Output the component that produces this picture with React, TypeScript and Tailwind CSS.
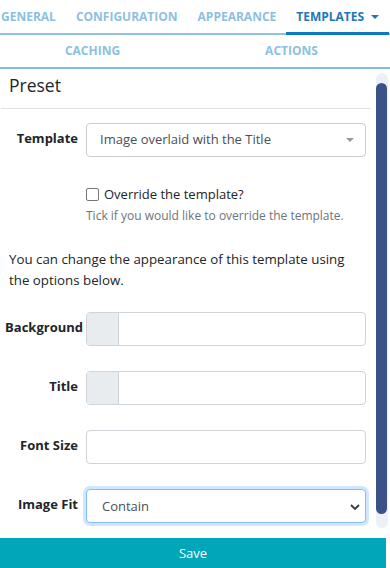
import { useState } from 'react';

const tabs = ['General', 'Configuration', 'Appearance'];

function Caret({ className }: { className?: string }) {
  return (
    <svg width="8" height="4" viewBox="0 0 8 4" className={className}>
      <path d="M0 0h8L4 4z" fill="currentColor" />
    </svg>
  );
}

function Label({ children, className = 'pr-[8px]' }: { children: string; className?: string }) {
  return (
    <div className={`w-[86px] shrink-0 pt-[5px] text-right text-[13px] leading-[21px] font-bold text-[#212529] whitespace-nowrap ${className}`}>
      {children}
    </div>
  );
}

function ColourInput() {
  return (
    <div className="flex h-[34px] flex-1 rounded-[4px] border border-[#ced4da] overflow-hidden">
      <div className="w-[32px] bg-[#e9ecef] border-r border-[#ced4da]" />
      <input className="flex-1 outline-none px-3" />
    </div>
  );
}

function App() {
  const [fit, setFit] = useState('contain');

  return (
    <div className="w-[390px] h-[568px] flex flex-col bg-white overflow-hidden font-['Open_Sans',sans-serif] text-[#212529]">
      {/* Tabs */}
      <div className="overflow-hidden">
        <nav className="flex h-[35px] border-b-2 border-[#90c2e0] ml-[-9px] w-[400px]">
          {tabs.map((t) => (
            <div key={t} className="px-[10px] pt-[1px] flex items-center text-[12px] font-bold uppercase text-[#8dc0df]">
              {t}
            </div>
          ))}
          <div className="px-[10px] pt-[1px] flex items-center gap-[7px] text-[12px] font-bold uppercase text-[#1c78b8] border-b-[3px] border-[#0b7ac0] mb-[-2px] h-[35px]">
            Templates
            <Caret className="text-[#1c78b8]" />
          </div>
        </nav>
        <div className="flex h-[34px] border-b-2 border-[#88bcdc] text-[12px] font-bold uppercase text-[#8dc0df]">
          <div className="w-[185px] flex items-center justify-center">Caching</div>
          <div className="w-[8px]" />
          <div className="flex-1 flex items-center justify-center">Actions</div>
        </div>
      </div>

      {/* Body */}
      <div className="flex flex-1 min-h-0">
        <div className="flex-1 overflow-hidden pr-[6px]">
          <div className="mr-[-5px] ml-[1px] border-b border-[#dee2e6] pl-[8px] pt-[3px] pb-[9px] text-[17.5px] leading-[27px] font-medium text-[#212529]">
            Preset
          </div>

          <div className="flex mt-[14px]">
            <Label>Template</Label>
            <div className="flex-1 h-[34px] rounded-[4px] border border-[#c9ced4] flex items-center pl-[13px] pr-[11px] text-[13px] text-[#495057]">
              <span className="flex-1">Image overlaid with the Title</span>
              <Caret className="text-[#999999]" />
            </div>
          </div>

          <div className="ml-[86px] mt-[27px]">
            <label className="flex items-center gap-[5px] text-[13px] leading-[21px] text-[#212529]">
              <input type="checkbox" className="appearance-none w-[13px] h-[13px] border border-[#767676] rounded-[2px] bg-white" />
              Override the template?
            </label>
            <p className="mt-[2px] text-[12px] leading-[18px] text-[#6c757d]">Tick if you would like to override the template.</p>
          </div>

          <p className="mt-[24px] pl-[9px] w-[350px] text-[13.3px] leading-[21px] text-[#212529]">
            You can change the appearance of this template using the options below.
          </p>

          <div className="flex mt-[21px]">
            <Label className="pl-[5px] pr-[3px]">Background</Label>
            <ColourInput />
          </div>

          <div className="flex mt-[25px]">
            <Label>Title</Label>
            <ColourInput />
          </div>

          <div className="flex mt-[25px]">
            <Label>Font Size</Label>
            <input className="flex-1 h-[34px] rounded-[4px] border border-[#ced4da] outline-none px-3" />
          </div>

          <div className="flex mt-[25px]">
            <Label>Image Fit</Label>
            <div className="relative flex-1 h-[34px]">
              <select
                value={fit}
                onChange={(e) => setFit(e.target.value)}
                className="appearance-none w-full h-full rounded-[4px] border border-[#80bdff] shadow-[0_0_0_3px_rgba(0,123,255,0.18)] outline-none pl-[15px] pt-[2px] text-[13px] text-[#495057] bg-white"
              >
                <option value="contain">Contain</option>
                <option value="cover">Cover</option>
              </select>
              <svg width="10" height="6" viewBox="0 0 10 6" className="absolute right-[6px] top-[15px] pointer-events-none">
                <path d="M1 1l4 4 4-4" fill="none" stroke="#343a40" strokeWidth="1.8" />
              </svg>
            </div>
          </div>
        </div>

        {/* Scrollbar */}
        <div className="w-[18px] shrink-0 pt-[4px] pl-[4px]">
          <div className="w-[12px] h-[455px] rounded-full bg-[#eef0f8] pt-[10px]">
            <div className="w-[11px] h-[431px] rounded-full bg-[#3b5289]" />
          </div>
        </div>
      </div>

      <button className="w-[386px] h-[30px] bg-[#01a7b9] text-white text-[13px] pt-[2px] flex items-center justify-center">
        Save
      </button>
    </div>
  );
}

export default App;
